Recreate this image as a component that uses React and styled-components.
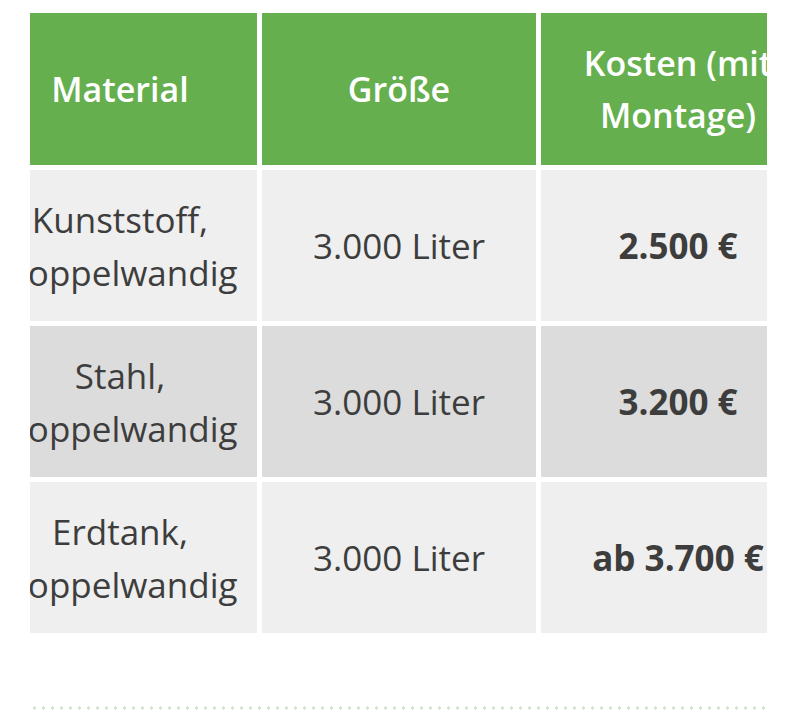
import React from "react";
import styled, { createGlobalStyle } from "styled-components";

const GlobalStyle = createGlobalStyle`
  html, body {
    margin: 0;
    padding: 0;
    background: #fff;
  }
  body {
    font-family: "Open Sans", "Liberation Sans", sans-serif;
    color: #3d3d3d;
  }
`;

const Page = styled.div`
  width: 800px;
  height: 724px;
  padding-top: 13px;
  box-sizing: border-box;
  overflow: hidden;
`;

const ScrollBox = styled.div`
  margin-left: 30px;
  width: 737px;
  overflow: hidden;
`;

const Table = styled.div`
  display: grid;
  grid-template-columns: repeat(3, 274px);
  grid-template-rows: 152px repeat(3, 151px);
  gap: 5px;
  margin-left: -47px;
  width: max-content;
`;

const HeadCell = styled.div`
  background: #66af4f;
  color: #fff;
  font-size: 34px;
  font-weight: 600;
  line-height: 52px;
  display: flex;
  align-items: center;
  justify-content: center;
  text-align: center;
  padding: 0 16px;
`;

const Cell = styled.div`
  background: ${(p) => (p.$dark ? "#dcdcdc" : "#efefef")};
  font-size: 35px;
  font-weight: ${(p) => (p.$bold ? 700 : 400)};
  line-height: 53px;
  display: flex;
  align-items: center;
  justify-content: center;
  text-align: center;
  padding: 0 10px;
  white-space: ${(p) => (p.$nowrap ? "nowrap" : "normal")};
`;

const DottedRule = styled.div`
  margin: 73px 0 0 30px;
  width: 737px;
  height: 4px;
  background-image: radial-gradient(circle, #cfe4c6 1.4px, transparent 1.8px);
  background-size: 9px 4px;
  background-repeat: repeat-x;
`;

const rows = [
  { material: ["Kunststoff,", "Doppelwandig"], size: "3.000 Liter", price: "2.500 €" },
  { material: ["Stahl,", "Doppelwandig"], size: "3.000 Liter", price: "3.200 €", dark: true },
  { material: ["Erdtank,", "Doppelwandig"], size: "3.000 Liter", price: "ab 3.700 €" },
];

export default function App() {
  return (
    <Page>
      <GlobalStyle />
      <ScrollBox>
        <Table>
          <HeadCell>Material</HeadCell>
          <HeadCell>Größe</HeadCell>
          <HeadCell>Kosten (mit Montage)</HeadCell>
          {rows.map((r, i) => (
            <React.Fragment key={i}>
              <Cell $dark={r.dark} $nowrap>
                <span>
                  {r.material[0]}
                  <br />
                  {r.material[1]}
                </span>
              </Cell>
              <Cell $dark={r.dark}>{r.size}</Cell>
              <Cell $dark={r.dark} $bold $nowrap>
                {r.price}
              </Cell>
            </React.Fragment>
          ))}
        </Table>
      </ScrollBox>
      <DottedRule />
    </Page>
  );
}
